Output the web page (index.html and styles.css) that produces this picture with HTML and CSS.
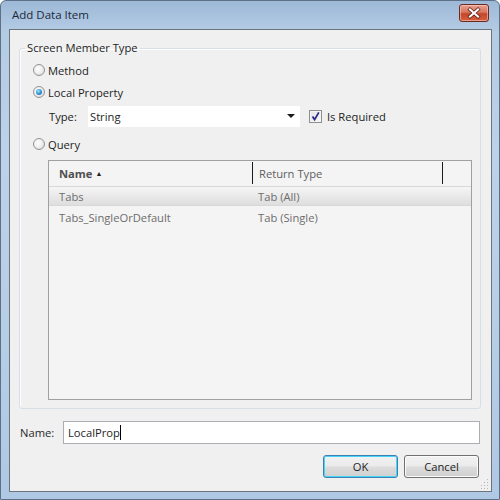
FILE: index.html
```html
<!DOCTYPE html>
<html>
<head>
<meta charset="utf-8">
<link rel="stylesheet" href="styles.css">
</head>
<body>
<div class="window">
  <div class="titlebar">
    <span class="title">Add Data Item</span>
    <span class="close">
      <svg width="28" height="16" viewBox="0 0 28 16"><path d="M10 4.5 L18 11.5 M18 4.5 L10 11.5" stroke="#5a1a10" stroke-width="3.6" stroke-linecap="square"/><path d="M10 4.5 L18 11.5 M18 4.5 L10 11.5" stroke="#ffffff" stroke-width="2.2" stroke-linecap="square"/></svg>
    </span>
  </div>
  <div class="client">
    <fieldset class="group">
      <legend>Screen Member Type</legend>
      <div class="opt"><span class="radio"></span><span>Method</span></div>
      <div class="opt"><span class="radio on"></span><span>Local Property</span></div>
      <div class="typerow">
        <span class="typelbl">Type:</span>
        <div class="combo"><span>String</span>
          <svg width="9" height="5" viewBox="0 0 9 5"><path d="M0 0 H8 L4 4 Z" fill="#1a1a1a"/></svg>
        </div>
        <span class="check"><svg width="11" height="11" viewBox="0 0 11 11"><path d="M2.5 5.5 L4.6 8.6 L8.8 1.4" fill="none" stroke="#2a2a8a" stroke-width="1.8"/></svg></span>
        <span class="checklbl">Is Required</span>
      </div>
      <div class="opt"><span class="radio"></span><span>Query</span></div>
      <div class="list">
        <div class="lhead">
          <div class="c1 hb">Name <span class="sort">▲</span></div>
          <div class="c2 hsep">Return Type</div>
          <div class="c3 hsep"></div>
        </div>
        <div class="lrow sel"><div class="c1">Tabs</div><div class="c2">Tab (All)</div></div>
        <div class="lrow"><div class="c1">Tabs_SingleOrDefault</div><div class="c2">Tab (Single)</div></div>
      </div>
    </fieldset>
    <div class="namerow">
      <span class="namelbl">Name:</span>
      <div class="textbox"><span>LocalProp</span><span class="caret"></span></div>
    </div>
    <div class="buttons">
      <button class="btn default">OK</button>
      <button class="btn">Cancel</button>
    </div>
    <svg class="grip" width="10" height="10" viewBox="0 0 10 10">
      <g fill="#b8b8b8">
        <rect x="8" y="0" width="1" height="1"/>
        <rect x="5" y="3" width="1" height="1"/><rect x="8" y="3" width="1" height="1"/>
        <rect x="2" y="6" width="1" height="1"/><rect x="5" y="6" width="1" height="1"/><rect x="8" y="6" width="1" height="1"/>
        <rect x="2" y="9" width="1" height="1"/><rect x="5" y="9" width="1" height="1"/><rect x="8" y="9" width="1" height="1"/>
      </g>
    </svg>
  </div>
</div>
</body>
</html>
```
FILE: styles.css
```css
html, body {
  margin: 0;
  padding: 0;
}
body {
  width: 500px;
  height: 500px;
  overflow: hidden;
  font-family: "Open Sans", "Noto Sans", sans-serif;
  font-size: 11.2px;
  color: #1e1e1e;
}
.window {
  width: 500px;
  height: 500px;
  box-sizing: border-box;
  border: 1px solid #5d7088;
  border-radius: 6px 6px 0 0;
  background: linear-gradient(180deg, #9db9d7 0%, #b4cbe4 6%, #bcd2ea 30%, #b6cde6 70%, #afc8e3 100%);
  display: flex;
  flex-direction: column;
}
.titlebar {
  height: 28px;
  display: flex;
  align-items: center;
  justify-content: space-between;
  padding: 0 10px 0 11px;
}
.title {
  font-size: 11.5px;
  color: #1b2a3a;
  margin-top: -1px;
}
.close {
  width: 28px;
  height: 16px;
  margin-top: -5px;
  border: 1px solid #6b2a22;
  border-radius: 3px;
  background: linear-gradient(180deg, #e7a08e 0%, #d8765f 45%, #c5462b 55%, #d65f3f 100%);
  box-shadow: inset 0 0 0 1px rgba(255,220,210,0.5);
  display: flex;
}
.client {
  position: relative;
  margin: 0 7px 0 8px;
  height: 461px;
  border: 1px solid #6c7480;
  background: #f0f0f0;
  display: flex;
  flex-direction: column;
}
.group {
  margin: 10px 10px 0 9px;
  padding: 6px 8px 8px 13px;
  border: 1px solid #d5dfe5;
  border-radius: 3px;
  box-shadow: inset 1px 1px 0 #fff;
  display: flex;
  flex-direction: column;
  min-width: 0;
}
.group legend {
  padding: 0 2px;
  margin-left: -8px;
  line-height: 16px;
}
.opt {
  height: 16px;
  display: flex;
  align-items: center;
  gap: 3px;
}
.opt + .opt { margin-top: 6px; }
.radio {
  width: 10px;
  height: 10px;
  border-radius: 50%;
  border: 1px solid #939393;
  background: radial-gradient(circle at 40% 40%, #ffffff 0%, #f0f0f0 45%, #d2d2d2 100%);
  box-sizing: content-box;
  position: relative;
  flex: none;
}
.radio.on::after {
  content: "";
  position: absolute;
  left: 2px;
  top: 2px;
  width: 6px;
  height: 6px;
  border-radius: 50%;
  background: radial-gradient(circle at 40% 35%, #9ee3ff 0%, #2a8fd0 55%, #0d5a9a 100%);
}
.typerow {
  display: flex;
  align-items: center;
  margin-top: 6px;
  height: 21px;
  padding-left: 16px;
}
.typelbl {
  width: 39px;
}
.combo {
  width: 212px;
  height: 21px;
  box-sizing: border-box;
  background: #fff;
  display: flex;
  align-items: center;
  justify-content: space-between;
  padding: 0 4px 0 2px;
}
.check {
  margin-left: 9px;
  width: 11px;
  height: 11px;
  border: 1px solid #8e8f8f;
  background: linear-gradient(135deg, #e4e4e4, #f8f8f8);
  box-shadow: inset 0 0 0 1px #f4f4f4;
  display: flex;
  flex: none;
}
.checklbl {
  margin-left: 5px;
}
.typerow + .opt { margin-top: 9px; }
.list {
  margin: 8px 0 0 15px;
  height: 240px;
  box-sizing: border-box;
  border: 1px solid #a0a0a0;
  background: #f4f4f4;
  color: #6d6d6d;
}
.lhead {
  height: 24px;
  display: flex;
  align-items: center;
  color: #5f5f5f;
}
.lhead > div {
  height: 22px;
  display: flex;
  align-items: center;
  box-sizing: border-box;
}
.hsep {
  border-left: 1px solid #1a1a1a;
}
.c1 {
  width: 203px;
  padding-left: 10px;
  box-sizing: border-box;
}
.c2 {
  width: 190px;
  padding-left: 6px;
  box-sizing: border-box;
}
.c3 {
  width: 28px;
}
.hb {
  font-weight: 700;
  color: #4f4f4f;
}
.sort {
  font-size: 7px;
  margin-left: 3px;
  font-weight: 400;
  color: #222;
}
.lrow {
  height: 19px;
  display: flex;
  align-items: center;
  margin-top: 1px;
}
.lrow + .lrow { margin-top: 2px; }
.lrow.sel {
  background: linear-gradient(180deg, #f6f6f6 0%, #e9e9e9 50%, #dedede 100%);
  border-top: 1px solid #d8d8d8;
  border-bottom: 1px solid #d8d8d8;
  height: 18px;
}
.namerow {
  margin: 12px 11px 0 10px;
  display: flex;
  align-items: center;
}
.namelbl {
  width: 43px;
  color: #2a2a2a;
}
.textbox {
  flex: 1;
  height: 23px;
  box-sizing: border-box;
  border: 1px solid #abadb3;
  background: #fff;
  display: flex;
  align-items: center;
  padding-left: 4px;
}
.caret {
  width: 1px;
  height: 15px;
  background: #000;
}
.buttons {
  margin: 11px 12px 0 0;
  display: flex;
  justify-content: flex-end;
  gap: 6px;
}
.btn {
  width: 75px;
  height: 23px;
  font-family: "Open Sans", "Noto Sans", sans-serif;
  font-size: 11.2px;
  color: #1e1e1e;
  border: 1px solid #707070;
  border-radius: 3px;
  background: linear-gradient(180deg, #f2f2f2 0%, #ebebeb 48%, #dddddd 52%, #cfcfcf 100%);
  box-shadow: inset 0 0 0 1px #fbfbfb;
  padding: 0;
}
.btn.default {
  border-color: #3c7fb1;
  box-shadow: inset 0 0 0 1px #48d4f7;
}
.grip {
  position: absolute;
  right: 2px;
  bottom: 2px;
}
```
